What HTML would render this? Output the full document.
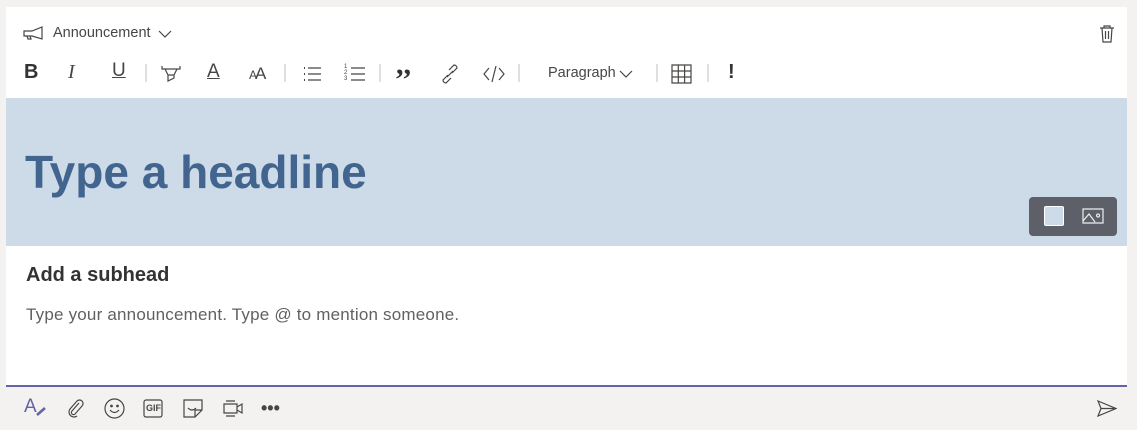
<!DOCTYPE html>
<html><head><style>
body{margin:0;width:1137px;height:430px;background:#f3f2f1;font-family:"Segoe UI","Liberation Sans",sans-serif;position:relative;overflow:hidden}
.card{position:absolute;left:6px;top:7px;width:1121px;height:378px;background:#fff}
.line{position:absolute;left:6px;top:385px;width:1121px;height:2px;background:#6264a7}
.ab{position:absolute}
.t{color:#484644}
svg{position:absolute;fill:none;stroke:#484644;stroke-width:1.2}
.sep{position:absolute;top:64px;width:2px;height:18px;background:#e1dfdd}
</style></head><body>
<div class="card"></div>
<svg style="left:22px;top:26px" width="24" height="16" viewBox="0 0 24 16"><path d="M2 5h8l10-4v12l-10-3H2z M5 10l1 3h3l-1-3"/></svg>
<div class="ab t" style="left:53px;top:25px;font-size:14.5px">Announcement</div>
<svg style="left:158px;top:29px" width="14" height="10"><path d="M1 2l6 6 6-6"/></svg>
<svg style="left:1099px;top:24px" width="16" height="20"><path d="M1 4h14M5 4V2h6v2M3 4l1 14h8l1-14M6.5 7v8M9.5 7v8"/></svg>
<div class="ab" style="left:24px;top:61px;font-size:20px;font-weight:bold;color:#333">B</div>
<div class="ab t" style="left:68px;top:61px;font-size:20px;font-style:italic;font-family:'Liberation Serif',serif">I</div>
<div class="ab t" style="left:112px;top:60px;font-size:19px;text-decoration:underline">U</div>
<div class="sep" style="left:145px"></div>
<svg style="left:161px;top:65px" width="20" height="18"><path d="M1 1v3h18V1M4 4l3 6h6l3-6M7 10v6l6-3v-3"/></svg>
<div class="ab t" style="left:207px;top:61px;font-size:19px;text-decoration:underline">A</div>
<div class="ab t" style="left:249px;top:64px;font-size:17px;letter-spacing:-2px"><span style="font-size:12px">A</span>A</div>
<div class="sep" style="left:284px"></div>
<svg style="left:302px;top:66px" width="20" height="16"><path d="M6 2h13M6 8h13M6 14h13" /><path d="M2 2h1M2 8h1M2 14h1" stroke-width="2"/></svg>
<div class="ab t" style="left:344px;top:64px;font-size:6px;line-height:6px">1<br>2<br>3</div>
<svg style="left:350px;top:66px" width="16" height="16"><path d="M1 2h14M1 8h14M1 14h14"/></svg>
<div class="sep" style="left:379px"></div>
<div class="ab" style="left:396px;top:48px;font-size:30px;font-weight:bold;color:#333;font-family:'Liberation Serif',serif">,,</div>
<svg style="left:439px;top:63px" width="22" height="22"><path d="M9 12l-5 5a3 3 0 0 0 3 3l5-5M13 10l5-5a3 3 0 0 0-3-3l-5 5M8 14l6-6"/></svg>
<svg style="left:483px;top:65px" width="22" height="18"><path d="M6 3L1 9l5 6M16 3l5 6-5 6M13 1L9 17"/></svg>
<div class="sep" style="left:518px"></div>
<div class="ab t" style="left:548px;top:65px;font-size:14.5px">Paragraph</div>
<svg style="left:619px;top:69px" width="14" height="10"><path d="M1 2l6 6 6-6"/></svg>
<div class="sep" style="left:656px"></div>
<svg style="left:671px;top:64px" width="21" height="20"><path d="M1 1h19v18H1zM7.3 1v18M13.6 1v18M1 7h19M1 13h19"/></svg>
<div class="sep" style="left:707px"></div>
<div class="ab" style="left:728px;top:61px;font-size:20px;font-weight:bold;color:#333">!</div>
<div class="ab" style="left:6px;top:98px;width:1121px;height:148px;background:#cddbe9"></div>
<div class="ab" style="left:25px;top:144px;font-size:46px;font-weight:bold;color:#41658f;line-height:56px">Type a headline</div>
<div class="ab" style="left:1029px;top:197px;width:88px;height:39px;background:#5d6068;border-radius:4px"></div>
<div class="ab" style="left:1044px;top:206px;width:18px;height:18px;background:#cddbe9;border:1px solid #fff;border-radius:2px"></div>
<svg style="left:1082px;top:208px;stroke:#eee" width="22" height="16"><path d="M1 1h20v14H1zM1 13l6-7 6 8M16 6a1.5 1.5 0 1 0 .1 0"/></svg>
<div class="ab" style="left:26px;top:264px;font-size:20px;font-weight:600;color:#333">Add a subhead</div>
<div class="ab" style="left:26px;top:305px;font-size:17px;color:#616161;letter-spacing:0.2px">Type your announcement. Type @ to mention someone.</div>
<div class="line"></div>
<div class="ab" style="left:24px;top:396px;font-size:19px;color:#6264a7">A</div>
<svg style="left:35px;top:407px;stroke:#6264a7;stroke-width:2.5" width="12" height="10"><path d="M2 8l8-7"/></svg>
<svg style="left:66px;top:398px" width="18" height="20"><path d="M13 5l-7 8a2 2 0 0 0 3 3l7-8a3.5 3.5 0 0 0-5-5l-7 8a5 5 0 0 0 7 7"/></svg>
<svg style="left:104px;top:398px" width="21" height="21"><circle cx="10.5" cy="10.5" r="9.5"/><path d="M6 12q4.5 5 9 0"/><circle cx="7.5" cy="8" r=".8" fill="#484644"/><circle cx="13.5" cy="8" r=".8" fill="#484644"/></svg>
<svg style="left:143px;top:399px" width="20" height="19"><rect x="1" y="1" width="18" height="17" rx="2"/></svg>
<div class="ab" style="left:146px;top:403px;font-size:9px;font-weight:bold;color:#484644">GIF</div>
<svg style="left:183px;top:399px" width="20" height="19"><path d="M1 1h18v10l-7 7H1zM12 18v-7h7M5 9q4 4 8 0"/></svg>
<svg style="left:222px;top:398px" width="22" height="20"><path d="M2 6h13v9H2zM15 9l5-3v9l-5-3M4 3h9M4 18h9"/></svg>
<div class="ab t" style="left:261px;top:398px;font-size:18px;font-weight:bold;letter-spacing:0px">•••</div>
<svg style="left:1097px;top:400px" width="20" height="17"><path d="M1 1l18 7.5L1 16l3-7.5zM4 8.5h15"/></svg>
</body></html>
